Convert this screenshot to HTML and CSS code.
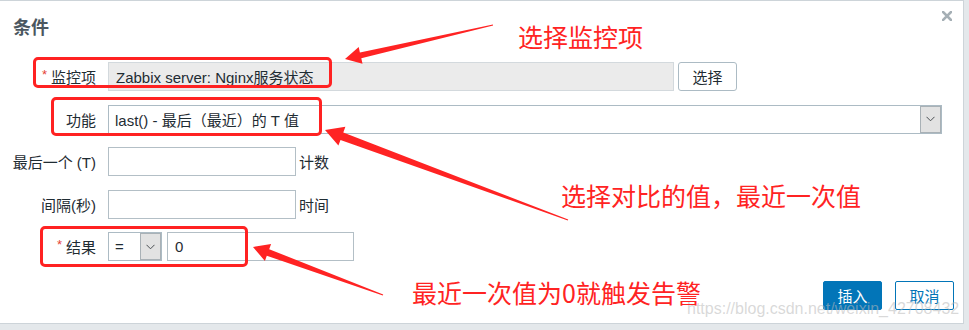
FILE: index.html
```html
<!DOCTYPE html>
<html lang="zh-CN">
<head>
<meta charset="utf-8">
<title>条件</title>
<link rel="stylesheet" href="styles.css">
</head>
<body>
<div class="page">
  <div class="dialog">
    <div class="header">
      <h3 class="title">条件</h3>
      <span class="close" aria-label="close">
        <svg width="10" height="10" viewBox="0 0 10 10"><path d="M1 1 L9 9 M9 1 L1 9" stroke="#a5afb5" stroke-width="2.6" stroke-linecap="square"/></svg>
      </span>
    </div>
    <div class="form">
      <div class="lbl"><span class="req">*</span>监控项</div>
      <div class="ctl">
        <div class="field readonly w-item">Zabbix server: Nginx服务状态</div>
        <div class="btn-select">选择</div>
      </div>

      <div class="lbl">功能</div>
      <div class="ctl">
        <div class="select w-func">
          <span class="select-text">last() - 最后（最近）的 T 值</span>
          <span class="select-arrow"><svg width="9" height="6" viewBox="0 0 9 6"><polyline points="0.5,0.8 4.5,4.8 8.5,0.8" fill="none" stroke="#4a4f53" stroke-width="1"/></svg></span>
        </div>
      </div>

      <div class="lbl">最后一个 (T)</div>
      <div class="ctl">
        <div class="field w-short"></div>
        <span class="unit">计数</span>
      </div>

      <div class="lbl">间隔(秒)</div>
      <div class="ctl">
        <div class="field w-short"></div>
        <span class="unit">时间</span>
      </div>

      <div class="lbl"><span class="req">*</span>结果</div>
      <div class="ctl ctl-result">
        <div class="select w-op">
          <span class="select-text">=</span>
          <span class="select-arrow"><svg width="9" height="6" viewBox="0 0 9 6"><polyline points="0.5,0.8 4.5,4.8 8.5,0.8" fill="none" stroke="#4a4f53" stroke-width="1"/></svg></span>
        </div>
        <div class="field w-value">0</div>
      </div>
    </div>
    <div class="footer">
      <div class="btn primary">插入</div>
      <div class="btn secondary">取消</div>
    </div>
  </div>

  <div class="watermark">https://blog.csdn.net/weixin_42708432</div>

  <div class="mark mark-1"></div>
  <div class="mark mark-2"></div>
  <div class="mark mark-3"></div>

  <svg class="arrows" width="969" height="330" viewBox="0 0 969 330">
    <polygon fill="#ff2323" points="492.9,24.5 359.9,52.5 358.7,47.1 345,59 362.5,63.7 361.3,58.3 493.1,25.5"/>
    <polygon fill="#ff2323" points="568.2,219.5 343.3,132.5 345.4,126.8 325,130 338.4,145.6 340.5,139.9 567.8,220.5"/>
    <polygon fill="#ff2323" points="383.2,294.5 269.2,249.2 271.1,244.1 253,247 264.9,260.9 266.8,255.8 382.8,295.5"/>
  </svg>

  <div class="note note-1">选择监控项</div>
  <div class="note note-2">选择对比的值，最近一次值</div>
  <div class="note note-3">最近一次值为0就触发告警</div>
</div>
</body>
</html>
```

FILE: styles.css
```css
* { box-sizing: border-box; }

html, body {
  margin: 0;
  padding: 0;
}

body {
  width: 969px;
  height: 330px;
  overflow: hidden;
  background: #e4e8eb;
  font-family: "Liberation Sans", "Noto Sans CJK SC", sans-serif;
  font-size: 15px;
  color: #1f2c33;
}

.page {
  position: relative;
  width: 969px;
  height: 330px;
}

.dialog {
  width: 964px;
  height: 324px;
  background: #ffffff;
  border-top: 1px solid #cdd4d9;
  border-right: 1px solid #cdd4d9;
  border-bottom: 1px solid #cdd4d9;
  display: flex;
  flex-direction: column;
}

.header {
  height: 61px;
  padding: 16px 0 0 13px;
  display: flex;
  justify-content: space-between;
  align-items: flex-start;
}

.title {
  margin: 0;
  font-size: 18px;
  line-height: 22px;
  font-weight: bold;
  color: #4b5760;
}

.close {
  display: block;
  width: 10px;
  height: 10px;
  margin: -6px 11px 0 0;
  line-height: 0;
}

.form {
  display: grid;
  grid-template-columns: 96px 1fr;
  grid-auto-rows: 29px;
  column-gap: 12px;
  row-gap: 13.5px;
}

.lbl {
  display: flex;
  align-items: center;
  justify-content: flex-end;
  white-space: nowrap;
  color: #1f2c33;
}

.req {
  color: #e54335;
  font-size: 13px;
  margin-right: 4px;
  position: relative;
  top: -2px;
}

.ctl {
  display: flex;
  align-items: center;
}

.field {
  height: 29px;
  border: 1px solid #b3bfc6;
  background: #ffffff;
  padding: 0 7px;
  display: flex;
  align-items: center;
  white-space: nowrap;
}

.field.readonly {
  background: #ebebeb;
  border-color: #d3d9dd;
}

.w-item { width: 566px; }
.w-short { width: 188px; }
.w-value { width: 187px; margin-left: 5px; }

.btn-select {
  height: 29px;
  width: 59px;
  margin-left: 4px;
  border: 1px solid #acbbc4;
  border-radius: 3px;
  background: #ffffff;
  display: flex;
  align-items: center;
  justify-content: center;
  color: #1f2c33;
}

.select {
  height: 29px;
  border: 1px solid #acbbc4;
  background: #ffffff;
  display: flex;
  align-items: stretch;
}

.w-func { width: 834px; }
.w-op { width: 54px; }

.select-text {
  flex: 1;
  display: flex;
  align-items: center;
  padding-left: 6px;
  white-space: nowrap;
}

.select-arrow {
  width: 21px;
  background: #e2e2e2;
  border: 1px solid #a9b1b6;
  display: flex;
  align-items: center;
  justify-content: center;
}

.unit {
  margin-left: 3px;
  color: #1f2c33;
}

.footer {
  margin-top: 20px;
  display: flex;
  justify-content: flex-end;
  gap: 13px;
  padding-right: 9px;
}

.btn {
  width: 59px;
  height: 29px;
  border-radius: 2px;
  display: flex;
  align-items: center;
  justify-content: center;
  font-size: 15px;
}

.btn.primary {
  background: #0275b8;
  border: 1px solid #0275b8;
  color: #ffffff;
}

.btn.secondary {
  background: #ffffff;
  border: 1px solid #0275b8;
  color: #0275b8;
}

.watermark {
  position: absolute;
  left: 687px;
  top: 300px;
  font-family: "Liberation Sans", sans-serif;
  font-size: 16px;
  line-height: 18px;
  color: rgba(185, 185, 185, 0.55);
  white-space: nowrap;
}

.mark {
  position: absolute;
  border: 3px solid #ff2222;
  border-radius: 5px;
}

.mark-1 { left: 33px; top: 57px; width: 299px; height: 31px; }
.mark-2 { left: 51px; top: 97px; width: 271px; height: 39px; }
.mark-3 { left: 40px; top: 226px; width: 208px; height: 41px; }

.arrows {
  position: absolute;
  left: 0;
  top: 0;
  pointer-events: none;
}

.note {
  position: absolute;
  font-family: "Noto Sans CJK SC", sans-serif;
  font-size: 25px;
  line-height: 25px;
  color: #ff2323;
  white-space: nowrap;
}

.note-1 { left: 518px; top: 24px; }
.note-2 { left: 561px; top: 183px; }
.note-3 { left: 412px; top: 280px; }
```
